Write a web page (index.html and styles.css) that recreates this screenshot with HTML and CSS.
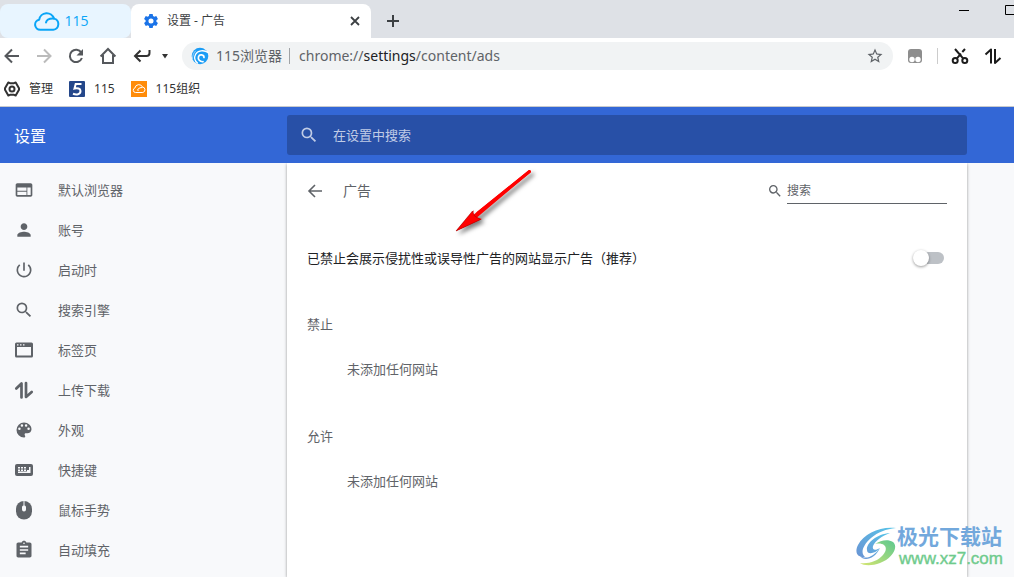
FILE: index.html
```html
<!DOCTYPE html>
<html lang="zh-CN">
<head>
<meta charset="utf-8">
<meta name="viewport" content="width=device-width, initial-scale=1">
<title>设置 - 广告</title>
<link rel="stylesheet" href="styles.css">
</head>
<body>
<div class="browser">
  <div class="tabstrip">
    <button class="tab tab-home" type="button">
      <svg class="cloud" viewBox="0 0 26 20" fill="none" stroke="#0aa5f7" stroke-width="2" stroke-linecap="round" stroke-linejoin="round"><path d="M11 18.800H6.200a5.100 5.100 0 0 1-1-10.100 7.600 7.600 0 0 1 14.800-1.100 5.700 5.700 0 0 1-.8 11.200H15M11 18.800h4"/><path d="M12 11.500c.6-2.800 3.500-4.300 8-4"/></svg>
      <span>115</span>
    </button>
    <div class="tab tab-active">
      <svg class="gear" viewBox="0 0 24 24" fill="#1a73e8"><path fill-rule="evenodd" d="M9.500 1.500h5l.6 3 1.900 1.100 2.900-1 2.500 4.300-2.300 2v2.200l2.300 2-2.500 4.300-2.900-1-1.900 1.100-.6 3h-5l-.6-3L7 18.400l-2.900 1-2.500-4.300 2.300-2v-2.200l-2.300-2 2.500-4.300 2.900 1 1.900-1.100zM12 8.200a3.800 3.800 0 1 0 0 7.600 3.800 3.800 0 0 0 0-7.600z"/></svg>
      <span class="tab-title">设置 - 广告</span>
      <button class="bare" type="button" aria-label="关闭"><svg class="close" viewBox="0 0 10 10" stroke="#3c4043" stroke-width="1.800"><path d="M1 1l8 8M9 1L1 9"/></svg></button>
    </div>
    <button class="bare new-tab" type="button" aria-label="新标签页"><svg class="plus" viewBox="0 0 12 12" stroke="#3c4043" stroke-width="2"><path d="M6 0v12M0 6h12"/></svg></button>
    <div class="window-buttons">
      <button class="bare" type="button" aria-label="最小化"><svg class="win" viewBox="0 0 10 10" stroke="#000"><path d="M0 5.500h10"/></svg></button>
      <button class="bare" type="button" aria-label="最大化"><svg class="win" viewBox="0 0 10 10" stroke="#000" fill="none"><path d="M.5.500h9v9h-9z"/></svg></button>
    </div>
  </div>

  <div class="toolbar">
    <div class="nav">
      <button class="bare" type="button" aria-label="后退"><svg class="i20" viewBox="0 0 20 20" fill="none" stroke="#55585c" stroke-width="2"><path d="M17 10H4M10 3.500L3.500 10l6.500 6.500"/></svg></button>
      <button class="bare" type="button" aria-label="前进"><svg class="i20" viewBox="0 0 20 20" fill="none" stroke="#bbb" stroke-width="2"><path d="M3 10h13M10 3.500l6.500 6.500-6.500 6.500"/></svg></button>
      <button class="bare" type="button" aria-label="刷新"><svg class="i20" viewBox="0 0 20 20" fill="none" stroke="#55585c" stroke-width="2"><path d="M15.300 6.500a6.200 6.200 0 1 0 .6 5.500"/><path fill="#55585c" stroke="none" d="M17 3v6.500h-6.500z"/></svg></button>
      <button class="bare" type="button" aria-label="主页"><svg class="i20" viewBox="0 0 20 20" fill="none" stroke="#55585c" stroke-width="2"><path d="M2.600 10.500L10 3l7.400 7.500M5 9v8h10V9"/></svg></button>
      <button class="bare enter" type="button" aria-label="恢复"><svg class="i20" viewBox="0 0 20 20" fill="none" stroke="#333" stroke-width="2"><path d="M17.500 4v3q0 3-3 3H3M8.500 4.500L3 10l5.500 5.500"/></svg></button>
      <button class="bare caret" type="button" aria-label="更多"><svg class="i6" viewBox="0 0 6 6" fill="#333"><path d="M0 1h6L3 5.500z"/></svg></button>
    </div>
    <div class="omnibox">
      <svg class="swirl" viewBox="0 0 18 18" fill="none" stroke="#fff" stroke-linecap="round"><circle cx="9" cy="9" r="8.300" fill="#1c9df5" stroke="none"/><path d="M17 5.500C13 2.500 6.500 3.500 4.500 7.500 3 10.500 4 14 6.500 16" stroke-width="1.300"/><path d="M13 10.500c0-3-4.500-3.700-5.500-.8-.8 2.600 1.300 5.300 4.500 5" stroke-width="1.700"/><path d="M1.500 12C1.500 8.500 2.500 6 4.500 4" stroke-width=".8" stroke="#bfe4ff"/></svg>
      <span class="site">115浏览器</span>
      <span class="url">chrome://<b>settings</b>/content/ads</span>
      <button class="bare star" type="button" aria-label="收藏"><svg class="i18" viewBox="0 0 24 24" fill="#5f6368"><path d="M22 9.240l-7.190-.62L12 2 9.190 8.630 2 9.240l5.460 4.730L5.820 21 12 17.270 18.180 21l-1.630-7.030L22 9.240zM12 15.400l-3.760 2.270 1-4.280-3.320-2.880 4.380-.38L12 6.100l1.710 4.040 4.380.38-3.320 2.880 1 4.280L12 15.400z"/></svg></button>
    </div>
    <div class="tools">
      <button class="bare" type="button" aria-label="扩展"><svg class="i20" viewBox="0 0 20 20"><rect x="3" y="3" width="14" height="14" rx="3" fill="#8d8d8d"/><circle cx="7" cy="13.500" r="2.700" fill="#fff"/><circle cx="13" cy="13.500" r="2.700" fill="#fff"/></svg></button>
      <span class="divider"></span>
      <button class="bare" type="button" aria-label="截图"><svg class="i20" viewBox="0 0 20 20" fill="none" stroke="#1c1c1c" stroke-width="2"><circle cx="5.200" cy="14.500" r="2.500"/><circle cx="14.800" cy="14.500" r="2.500"/><path d="M13.300 12.700L5 3M6.700 12.700l4.300-5M12.300 6L15 3"/></svg></button>
      <button class="bare" type="button" aria-label="上传下载"><svg class="i20" viewBox="0 0 20 20" fill="none" stroke="#1c1c1c" stroke-width="2" stroke-linejoin="round"><path d="M2.500 8.500L8 3.500V17.500M12 3v14l5.500-5"/></svg></button>
    </div>
  </div>

  <nav class="bookmarks">
    <a href="#manage"><svg class="i16" viewBox="0 0 16 16" fill="none" stroke="#333" stroke-width="2" stroke-linejoin="round"><path d="M4.300 1.500L6 2.200h4l1.700-.7L15 7.200v1.600l-3.300 5.700-1.700-.7H6l-1.700.7L1 8.800V7.200z"/><circle cx="8" cy="8" r="2.500"/></svg><span>管理</span></a>
    <a href="#115"><svg class="i16" viewBox="0 0 16 16"><rect width="16" height="16" rx="1" fill="#24478a"/><path d="M12.500 3H6.700L5.500 7.500c3-.8 6-.1 6 2.500 0 3.500-4 4.100-7.500 2.700" fill="none" stroke="#fff" stroke-width="2"/></svg><span>115</span></a>
    <a href="#org"><svg class="i16" viewBox="0 0 16 16"><rect width="16" height="16" fill="#ff8c0a"/><path d="M4.500 11.500a2.300 2.300 0 0 1-.6-4.500A4 4 0 0 1 11.500 6a2.800 2.800 0 0 1 .3 5.500zM6.500 8.500Q9 6 11.500 6.500M7 8.500v1.500" fill="none" stroke="#fff"/></svg><span>115组织</span></a>
  </nav>
</div>

<header class="header">
  <h1>设置</h1>
  <label class="header-search">
    <svg class="i20" viewBox="0 0 24 24" fill="currentColor"><path d="M15.500 14h-.79l-.28-.27A6.470 6.470 0 0 0 16 9.500 6.500 6.500 0 1 0 9.500 16c1.610 0 3.090-.59 4.230-1.570l.27.28v.79l5 4.990L20.490 19l-4.990-5zm-6 0C7.010 14 5 11.990 5 9.500S7.010 5 9.500 5 14 7.010 14 9.500 11.990 14 9.500 14z"/></svg>
    <input type="text" placeholder="在设置中搜索" aria-label="在设置中搜索">
  </label>
</header>

<div class="body">
  <nav class="sidebar">
    <a href="#default"><svg class="i20" viewBox="0 0 24 24"><path d="M20 4H4c-1.100 0-1.990.9-1.990 2L2 18c0 1.100.9 2 2 2h16c1.100 0 2-.9 2-2V6c0-1.100-.9-2-2-2zm-5 14H4v-4h11v4zm0-5H4V9h11v4zm5 5h-4V9h4v9z"/></svg><span>默认浏览器</span></a>
    <a href="#account"><svg class="i20" viewBox="0 0 24 24"><path d="M12 12c2.210 0 4-1.790 4-4s-1.790-4-4-4-4 1.790-4 4 1.790 4 4 4zm0 2c-2.670 0-8 1.340-8 4v2h16v-2c0-2.660-5.330-4-8-4z"/></svg><span>账号</span></a>
    <a href="#startup"><svg class="i20" viewBox="0 0 24 24"><path d="M13 3h-2v10h2V3zm4.830 2.170l-1.420 1.420A6.920 6.920 0 0 1 19 12a7 7 0 1 1-11.420-5.420L6.170 5.170A8.930 8.930 0 0 0 3 12a9 9 0 1 0 14.830-6.830z"/></svg><span>启动时</span></a>
    <a href="#engine"><svg class="i20" viewBox="0 0 24 24"><path d="M15.500 14h-.79l-.28-.27A6.470 6.470 0 0 0 16 9.500 6.500 6.500 0 1 0 9.500 16c1.610 0 3.090-.59 4.230-1.570l.27.28v.79l5 4.990L20.490 19l-4.990-5zm-6 0C7.010 14 5 11.990 5 9.500S7.010 5 9.500 5 14 7.010 14 9.500 11.990 14 9.500 14z"/></svg><span>搜索引擎</span></a>
    <a href="#tabs"><svg class="i20" viewBox="0 0 20 20"><path fill-rule="evenodd" d="M2.500 2.500h15Q19 2.500 19 4v12q0 1.500-1.500 1.500h-15Q1 17.500 1 16V4q0-1.500 1.500-1.500zM3 7v8.500h14V7zM3 4.300v1.200h1.500V4.300zm3 0v1.200h1.500V4.300zm3 0v1.200h1.500V4.300z"/></svg><span>标签页</span></a>
    <a href="#transfer"><svg class="i20" viewBox="0 0 20 20"><path d="M2.300 8.500L7.500 3.500V17.500M12 3v14l5.700-5" fill="none" stroke="#5f6368" stroke-width="2.700" stroke-linejoin="round" stroke-linecap="round"/></svg><span>上传下载</span></a>
    <a href="#look"><svg class="i20" viewBox="0 0 24 24"><path d="M12 3a9 9 0 0 0 0 18c.83 0 1.500-.67 1.500-1.500 0-.39-.15-.74-.39-1.010-.23-.26-.38-.61-.38-.99 0-.83.67-1.500 1.500-1.500H16c2.760 0 5-2.240 5-5 0-4.420-4.030-8-9-8zm-5.500 9a1.500 1.500 0 1 1 0-3 1.500 1.500 0 0 1 0 3zm3-4a1.500 1.500 0 1 1 0-3 1.500 1.500 0 0 1 0 3zm5 0a1.500 1.500 0 1 1 0-3 1.500 1.500 0 0 1 0 3zm3 4a1.500 1.500 0 1 1 0-3 1.500 1.500 0 0 1 0 3z"/></svg><span>外观</span></a>
    <a href="#keys"><svg class="i20" viewBox="0 0 20 20"><rect x="1" y="4" width="18" height="12" rx="2"/><path fill="#f8f9fb" d="M4 7h2v1.500H4zM7 7h2v1.500H7zM10 7h2v1.500h-2zM15 7h1.500v6H4v-1.500h9V10h2zM4 9.500h2V11H4zM7 9.500h2V11H7zM10 9.500h2V11h-2z"/></svg><span>快捷键</span></a>
    <a href="#mouse"><svg class="i20" viewBox="0 0 20 20"><rect x="2" y="1" width="16" height="18.500" rx="8"/><path fill="#f8f9fb" d="M9.500 1h1v4.500a1.700 1.700 0 0 1 1.500 1.700V9.500a2 2 0 0 1-4 0V7.200a1.700 1.700 0 0 1 1.500-1.700z"/></svg><span>鼠标手势</span></a>
    <a href="#fill"><svg class="i20" viewBox="0 0 24 24"><path d="M19 3h-4.180C14.400 1.840 13.300 1 12 1s-2.400.84-2.820 2H5c-1.100 0-2 .9-2 2v14c0 1.100.9 2 2 2h14c1.100 0 2-.9 2-2V5c0-1.100-.9-2-2-2zm-7 0c.55 0 1 .45 1 1s-.45 1-1 1-1-.45-1-1 .45-1 1-1zm2 14H7v-2h7v2zm3-4H7v-2h10v2zm0-4H7V7h10v2z"/></svg><span>自动填充</span></a>
  </nav>

  <main class="card">
    <div class="card-head">
      <button class="bare back" type="button" aria-label="返回"><svg class="i16" viewBox="0 0 16 16" fill="none" stroke="#5f6368" stroke-width="1.600"><path d="M15 8H2.500M8 2L2 8l6 6"/></svg></button>
      <h2>广告</h2>
      <label class="card-search">
        <svg class="i16" viewBox="0 0 24 24" fill="#5f6368"><path d="M15.500 14h-.79l-.28-.27A6.470 6.470 0 0 0 16 9.500 6.500 6.500 0 1 0 9.500 16c1.610 0 3.090-.59 4.230-1.570l.27.28v.79l5 4.990L20.490 19l-4.990-5zm-6 0C7.010 14 5 11.990 5 9.500S7.010 5 9.500 5 14 7.010 14 9.500 11.990 14 9.500 14z"/></svg>
        <input type="text" placeholder="搜索" aria-label="搜索">
      </label>
    </div>
    <label class="toggle-row">
      <span>已禁止会展示侵扰性或误导性广告的网站显示广告（推荐）</span>
      <input class="toggle" type="checkbox">
    </label>
    <section>
      <h3>禁止</h3>
      <p>未添加任何网站</p>
    </section>
    <section>
      <h3>允许</h3>
      <p>未添加任何网站</p>
    </section>
    <svg class="pointer" viewBox="0 0 90 80"><path d="M77 9L20 55l2-6L4 70l26-12-5-1.500L79 11z" fill="#f00" stroke="none"/><path d="M77.500 10.500L26 52" stroke="#f00" stroke-width="3" stroke-linecap="round"/><path d="M4 70L20.500 50l2 5 6 3.500z" fill="#f00" stroke="#900" stroke-width=".5"/></svg>
  </main>
</div>

<div class="watermark">
  <svg class="mark" viewBox="0 0 42 40">
    <defs>
      <linearGradient id="blue" x1="1" y1="0" x2="0" y2="1"><stop offset="0" stop-color="#55c4e8"/><stop offset="1" stop-color="#6a94d4"/></linearGradient>
      <linearGradient id="green" x1="1" y1="0" x2="0" y2="1"><stop offset="0" stop-color="#5cc890"/><stop offset="1" stop-color="#d5e56f"/></linearGradient>
    </defs>
    <path d="M41 1C26-1 9 6 3 18-1 26 3 31 10 30 5 26 8 18 16 11 23 5 31 2 41 1z" fill="url(#blue)"/>
    <path d="M35 6C22 7 11 16 12 23c0 5 8 4 13-2-5 11-16 14-20 8 7 4 14 0 20-8-5 3-8 2-7-2 2-5 9-10 17-13z" fill="url(#blue)"/>
    <path d="M20 17c6-4 13-5 18-2 6 5-1 17-13 21-8 3-16 3-20 0 9 1 18-2 23-8 6-7 2-13-8-11z" fill="url(#green)"/>
  </svg>
  <div class="mark-text"><span class="mark-name">极光下载站</span><span class="mark-url">www.xz7.com</span></div>
</div>
</body>
</html>
```
FILE: styles.css
```css
* { box-sizing: border-box; }

body {
  margin: 0;
  min-height: 100vh;
  display: flex;
  flex-direction: column;
  overflow: hidden;
  position: relative;
  background: #f8f9fb;
  color: #5f6368;
  font: 13px/20px "Noto Sans", "Noto Sans CJK SC", sans-serif;
}

h1, h2, h3, p { margin: 0; font-weight: 400; }
a { color: inherit; text-decoration: none; }
svg { display: block; flex: none; }
input { font: inherit; color: inherit; }

.bare {
  display: flex;
  padding: 0;
  border: 0;
  background: none;
}

.i20 { width: 20px; height: 20px; }
.i18 { width: 18px; height: 18px; }
.i16 { width: 16px; height: 16px; }
.i6 { width: 6px; height: 6px; }

/* Browser chrome */
.browser {
  background: #fff;
  border-bottom: 1px solid #c8cacd;
}

.tabstrip {
  display: flex;
  height: 38px;
  padding-top: 4px;
  background: #dee1e6;
}

.tab {
  display: flex;
  align-items: center;
  border: 0;
  border-radius: 8px 8px 0 0;
}

.tab-home {
  width: 131px;
  justify-content: center;
  gap: 4px;
  padding: 0 8px 0 0;
  border-radius: 8px;
  background: #e8f5ff;
  color: #0aa5f7;
  font: 14px/20px "Open Sans", sans-serif;
}

.cloud { width: 26px; height: 20px; }

.tab-active {
  width: 240px;
  padding: 0 11px 0 12px;
  background: #fff;
  color: #3c4043;
  font-size: 12px;
}

.gear { width: 16px; height: 16px; }
.tab-title { flex: 1; padding-left: 8px; }
.close { width: 10px; height: 10px; }
.new-tab { align-items: center; padding-left: 16px; }
.plus { width: 12px; height: 12px; }

.window-buttons {
  display: flex;
  gap: 36px;
  height: 12px;
  margin-left: auto;
  margin-right: -1px;
  padding-top: 1px;
}

.win { width: 10px; height: 10px; }

.toolbar {
  display: flex;
  align-items: center;
  height: 36px;
  padding: 0 11px 0 2px;
}

.nav { display: flex; align-items: center; gap: 12px; }
.enter { margin-left: 2px; }
.caret { margin: 0 14px 0 -2px; }

.omnibox {
  display: flex;
  flex: 1;
  align-items: center;
  height: 28px;
  padding: 0 9px;
  border-radius: 14px;
  background: #f1f3f4;
}

.swirl { width: 18px; height: 18px; }

.site {
  margin-left: 7px;
  padding-right: 7px;
  border-right: 1px solid #a0a3a6;
  font-size: 14px;
  line-height: 16px;
}

.url {
  flex: 1;
  padding-left: 9px;
  font-size: 14px;
}

.url b { color: #202124; font-weight: 400; }

.tools { display: flex; align-items: center; gap: 12px; padding-left: 12px; }
.divider { width: 1px; height: 16px; background: #ccc; }
.tools .bare:last-child { margin-left: 1px; }

.bookmarks {
  display: flex;
  align-items: center;
  gap: 16px;
  height: 32px;
  padding: 0 4px 3px;
  color: #333;
  font-size: 12px;
}

.bookmarks a { display: flex; align-items: center; gap: 9px; }

/* Settings header */
.header {
  display: grid;
  grid-template-columns: 287px minmax(0, 680px) 1fr;
  align-items: center;
  height: 56px;
  background: #3367d6;
  color: #fff;
}

.header h1 { padding: 2px 0 0 14px; font-size: 16px; }

.header-search {
  display: flex;
  align-items: center;
  gap: 14px;
  height: 40px;
  padding: 0 12px 1px;
  border-radius: 3px;
  background: #2850a7;
  color: #c0cce6;
}

.header-search input {
  flex: 1;
  min-width: 0;
  padding: 0;
  border: 0;
  outline: 0;
  background: none;
}

input::placeholder { color: inherit; opacity: 1; }

/* Settings body */
.body {
  display: grid;
  flex: 1;
  grid-template-columns: 287px minmax(0, 680px) 1fr;
}

.sidebar { padding: 7px 0 0 14px; }

.sidebar a {
  display: flex;
  align-items: center;
  gap: 24px;
  height: 40px;
}

.sidebar svg { fill: #5f6368; }

.card {
  position: relative;
  padding: 0 20px;
  background: #fff;
  box-shadow: 0 1px 3px rgba(0, 0, 0, .4);
  clip-path: inset(0 -4px 0 -4px);
}

.card-head {
  display: flex;
  align-items: center;
  height: 56px;
}

.card-head h2 { padding-left: 20px; font-size: 14px; }

.card-search {
  display: flex;
  align-items: center;
  gap: 4px;
  margin-left: auto;
}

.card-search input {
  width: 160px;
  height: 26px;
  padding: 0;
  border: 0;
  border-bottom: 1px solid #5f6368;
  outline: 0;
  background: none;
  font-size: 12px;
}

.toggle-row {
  display: flex;
  align-items: center;
  justify-content: space-between;
  height: 78px;
  padding-right: 3px;
  color: #202124;
}

.toggle {
  appearance: none;
  display: flex;
  align-items: center;
  width: 30px;
  height: 12px;
  margin: 0;
  border-radius: 6px;
  background: #bdc1c6;
}

.toggle::before {
  content: "";
  width: 16px;
  height: 16px;
  margin-left: -1px;
  border-radius: 50%;
  background: #fff;
  box-shadow: 0 1px 3px rgba(0, 0, 0, .4);
}

.toggle:checked { justify-content: flex-end; background: #8ab4f8; }

section { height: 112px; padding-top: 17px; }
section h3 { font-size: 13px; }
section p { padding: 25px 0 0 40px; }

/* Annotation arrow laid over the card */
.pointer {
  position: absolute;
  left: 165px;
  top: -2px;
  width: 90px;
  height: 80px;
  fill: none;
  filter: drop-shadow(3px 3px 2px rgba(0, 0, 0, .5));
}

/* Site watermark laid over the page corner */
.watermark {
  position: absolute;
  right: 11px;
  bottom: 8px;
  display: flex;
  align-items: center;
  font-weight: 700;
}

.mark { width: 42px; height: 40px; }
.mark-text { display: flex; flex-direction: column; }

.mark-name {
  color: #72a8dc;
  font: 700 21px/24px "Liberation Sans", "Noto Sans CJK SC", sans-serif;
}

.mark-url {
  padding-left: 2px;
  color: #6fcb8d;
  font: 17px/20px "Liberation Sans", sans-serif;
  -webkit-text-stroke: 0.4px #6fcb8d;
}
```
